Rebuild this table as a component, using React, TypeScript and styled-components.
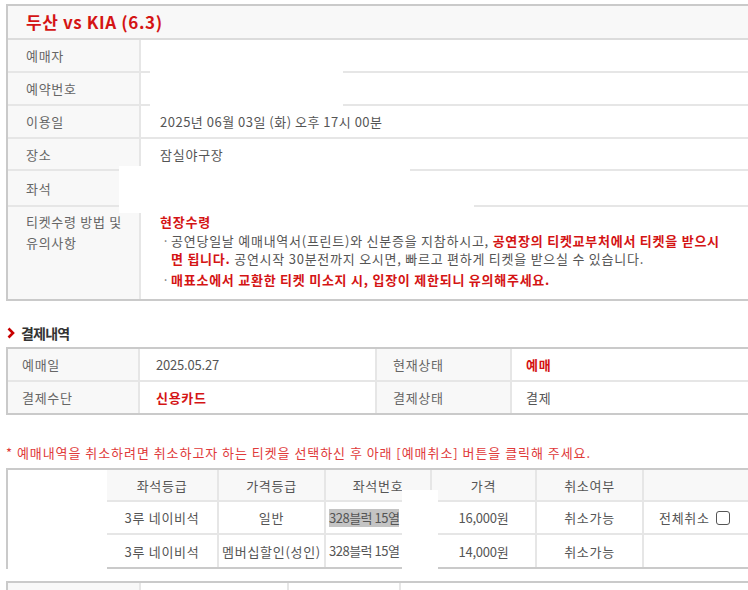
import React from "react";
import styled, { createGlobalStyle } from "styled-components";

const GlobalStyle = createGlobalStyle`
  html, body { margin: 0; padding: 0; background: #fff; overflow: hidden; }
  body {
    font-family: "Noto Sans CJK KR", "Noto Sans", sans-serif;
    font-size: 13px;
    color: #555;
    letter-spacing: 0.7px;
  }
  * { box-sizing: border-box; }
`;

const RED = "#d41414";
const OUTER = "#cacaca";
const LINE = "#e6e6e6";
const LABEL_BG = "#f8f8f8";

const Page = styled.div`
  position: relative;
  width: 790px;
  height: 590px;
  padding: 4px 0 0 6px;
`;

const InfoBox = styled.section`
  width: 780px;
  border-top: 2px solid ${OUTER};
  border-left: 2px solid ${OUTER};
  border-bottom: 2px solid ${OUTER};
`;

const TitleRow = styled.h1`
  margin: 0;
  height: 34px;
  line-height: 32px;
  padding-left: 18px;
  background: ${LABEL_BG};
  border-bottom: 2px solid #dcdcdc;
  color: ${RED};
  font-size: 17px;
  font-weight: 700;
  letter-spacing: 0.6px;
`;

const InfoRow = styled.div<{ $h: number; $last?: boolean }>`
  display: grid;
  grid-template-columns: 133px 1fr;
  height: ${(p) => p.$h}px;
  border-bottom: ${(p) => (p.$last ? "none" : `2px solid ${LINE}`)};
`;

const Label = styled.div<{ $top?: boolean }>`
  background: ${LABEL_BG};
  border-right: 2px solid ${LINE};
  padding-left: 18px;
  color: #666;
  display: flex;
  align-items: ${(p) => (p.$top ? "flex-start" : "center")};
  padding-top: ${(p) => (p.$top ? "4px" : "0")};
  line-height: ${(p) => (p.$top ? "21px" : "normal")};
`;

const Value = styled.div<{ $top?: boolean; $tight?: boolean }>`
  padding-left: 19px;
  display: flex;
  flex-direction: column;
  justify-content: ${(p) => (p.$top ? "flex-start" : "center")};
  padding-top: ${(p) => (p.$top ? "5px" : "0")};
  color: #555;
  white-space: nowrap;
  letter-spacing: ${(p) => (p.$tight ? "0.5px" : "0.75px")};
`;

const Strong = styled.span`
  color: ${RED};
  font-weight: 700;
`;

const Num = styled.span`
  letter-spacing: -0.2px;
`;

const MethodTitle = styled.div`
  color: ${RED};
  font-weight: 700;
  line-height: 20px;
`;

const Bullet = styled.div<{ $gap?: number }>`
  display: flex;
  line-height: 18px;
  margin-top: ${(p) => p.$gap ?? 0}px;
`;

const BulletMark = styled.span`
  width: 11px;
  padding-left: 2px;
  color: #777;
`;

const SectionHeading = styled.h2`
  margin: 22px 0 4px 0;
  display: flex;
  align-items: center;
  gap: 6px;
  height: 20px;
  font-size: 14px;
  font-weight: 700;
  letter-spacing: -0.8px;
  color: #333;
  padding-left: 1px;
`;

const PayTable = styled.div`
  width: 780px;
  border-top: 2px solid ${OUTER};
  border-left: 2px solid ${OUTER};
  border-bottom: 2px solid ${OUTER};
`;

const PayRow = styled.div<{ $last?: boolean }>`
  display: grid;
  grid-template-columns: 132px 237px 135px 1fr;
  height: ${(p) => (p.$last ? 31 : 33)}px;
  border-bottom: ${(p) => (p.$last ? "none" : `2px solid ${LINE}`)};
`;

const PayCell = styled.div<{ $label?: boolean; $pad: number }>`
  display: flex;
  align-items: center;
  padding-left: ${(p) => p.$pad}px;
  background: ${(p) => (p.$label ? LABEL_BG : "#fff")};
  border-right: 2px solid ${LINE};
  color: ${(p) => (p.$label ? "#666" : "#555")};
`;

const Notice = styled.p`
  margin: 28px 0 5px 0;
  line-height: 20px;
  color: #e03a3a;
  white-space: nowrap;
  letter-spacing: 0.95px;
`;

const TicketTable = styled.div`
  display: flex;
  width: 780px;
  border-top: 2px solid ${OUTER};
`;

const LeftCell = styled.div`
  width: 101px;
  height: 99px;
  border-left: 2px solid ${OUTER};
`;

const TicketGrid = styled.div`
  flex: 1;
  border-bottom: 2px solid ${OUTER};
`;

const TRow = styled.div<{ $h: number; $head?: boolean; $last?: boolean }>`
  display: grid;
  grid-template-columns: 112px 107px 106px 105px 107px 1fr;
  height: ${(p) => p.$h}px;
  background: ${(p) => (p.$head ? LABEL_BG : "#fff")};
  border-bottom: ${(p) => (p.$last ? "none" : `2px solid ${LINE}`)};
`;

const TCell = styled.div<{ $left?: number }>`
  display: flex;
  align-items: center;
  justify-content: ${(p) => (p.$left !== undefined ? "flex-start" : "center")};
  padding-left: ${(p) => p.$left ?? 0}px;
  border-right: 2px solid ${LINE};
  color: #555;
  white-space: nowrap;
  &:last-child { border-right: none; }
`;

const SeatText = styled.span<{ $selected?: boolean }>`
  background: ${(p) => (p.$selected ? "#c4c4c4" : "transparent")};
  line-height: 18px;
  letter-spacing: -0.5px;
`;

const CheckBox = styled.span`
  display: inline-block;
  width: 14px;
  height: 14px;
  border: 1.5px solid #555;
  border-radius: 3px;
  margin-left: 6px;
  background: #fff;
`;

const BottomTable = styled.div`
  display: grid;
  grid-template-columns: 133px 148px 112px 1fr;
  width: 780px;
  height: 30px;
  margin-top: 12px;
  border-top: 2px solid ${OUTER};
  border-left: 2px solid ${OUTER};
`;

const BottomCell = styled.div`
  border-right: 2px solid ${LINE};
  &:nth-child(1) { background: ${LABEL_BG}; }
`;

const Mask = styled.div`
  position: absolute;
  background: #fff;
`;

const Chevron = () => (
  <svg width="8" height="12" viewBox="0 0 8 12">
    <polyline points="1.5,1.5 6,6 1.5,10.5" fill="none" stroke="#c80000" strokeWidth="2.6" />
  </svg>
);

export default function App() {
  return (
    <>
      <GlobalStyle />
      <Page>
        <InfoBox>
          <TitleRow>두산 vs KIA (6.3)</TitleRow>
          <InfoRow $h={33}>
            <Label>예매자</Label>
            <Value />
          </InfoRow>
          <InfoRow $h={33}>
            <Label>예약번호</Label>
            <Value />
          </InfoRow>
          <InfoRow $h={33}>
            <Label>이용일</Label>
            <Value $tight>2025년 06월 03일 (화) 오후 17시 00분</Value>
          </InfoRow>
          <InfoRow $h={32}>
            <Label>장소</Label>
            <Value>잠실야구장</Value>
          </InfoRow>
          <InfoRow $h={36}>
            <Label>좌석</Label>
            <Value />
          </InfoRow>
          <InfoRow $h={92} $last>
            <Label $top>
              티켓수령 방법 및
              <br />
              유의사항
            </Label>
            <Value $top>
              <MethodTitle>현장수령</MethodTitle>
              <Bullet>
                <BulletMark>·</BulletMark>
                <span>
                  공연당일날 예매내역서(프린트)와 신분증을 지참하시고, <Strong>공연장의 티켓교부처에서 티켓을 받으시</Strong>
                  <br />
                  <Strong>면 됩니다.</Strong> 공연시작 30분전까지 오시면, 빠르고 편하게 티켓을 받으실 수 있습니다.
                </span>
              </Bullet>
              <Bullet $gap={3}>
                <BulletMark>·</BulletMark>
                <Strong>매표소에서 교환한 티켓 미소지 시, 입장이 제한되니 유의해주세요.</Strong>
              </Bullet>
            </Value>
          </InfoRow>
        </InfoBox>

        <SectionHeading>
          <Chevron />
          결제내역
        </SectionHeading>
        <PayTable>
          <PayRow>
            <PayCell $label $pad={14}>예매일</PayCell>
            <PayCell $pad={16}>
              <Num>2025.05.27</Num>
            </PayCell>
            <PayCell $label $pad={16}>현재상태</PayCell>
            <PayCell $pad={14}>
              <Strong>예매</Strong>
            </PayCell>
          </PayRow>
          <PayRow $last>
            <PayCell $label $pad={14}>결제수단</PayCell>
            <PayCell $pad={16}>
              <Strong>신용카드</Strong>
            </PayCell>
            <PayCell $label $pad={16}>결제상태</PayCell>
            <PayCell $pad={14}>결제</PayCell>
          </PayRow>
        </PayTable>

        <Notice>* 예매내역을 취소하려면 취소하고자 하는 티켓을 선택하신 후 아래 [예매취소] 버튼을 클릭해 주세요.</Notice>

        <TicketTable>
          <LeftCell />
          <TicketGrid>
            <TRow $h={32} $head>
              <TCell>좌석등급</TCell>
              <TCell>가격등급</TCell>
              <TCell>좌석번호</TCell>
              <TCell>가격</TCell>
              <TCell>취소여부</TCell>
              <TCell />
            </TRow>
            <TRow $h={33}>
              <TCell>3루 네이비석</TCell>
              <TCell>일반</TCell>
              <TCell $left={3}>
                <SeatText $selected>328블럭 15열</SeatText>
              </TCell>
              <TCell>
                <Num>16,000원</Num>
              </TCell>
              <TCell>취소가능</TCell>
              <TCell $left={15}>
                전체취소
                <CheckBox />
              </TCell>
            </TRow>
            <TRow $h={32} $last>
              <TCell>3루 네이비석</TCell>
              <TCell>멤버십할인(성인)</TCell>
              <TCell $left={3}>
                <SeatText>328블럭 15열</SeatText>
              </TCell>
              <TCell>
                <Num>14,000원</Num>
              </TCell>
              <TCell>취소가능</TCell>
              <TCell />
            </TRow>
          </TicketGrid>
        </TicketTable>

        <BottomTable>
          <BottomCell />
          <BottomCell />
          <BottomCell />
          <BottomCell />
        </BottomTable>

        <Mask style={{ left: 150, top: 41, width: 193, height: 66 }} />
        <Mask style={{ left: 119, top: 166, width: 291, height: 47 }} />
        <Mask style={{ left: 410, top: 180, width: 64, height: 33 }} />
        <Mask style={{ left: 402, top: 490, width: 36, height: 87 }} />
      </Page>
    </>
  );
}
